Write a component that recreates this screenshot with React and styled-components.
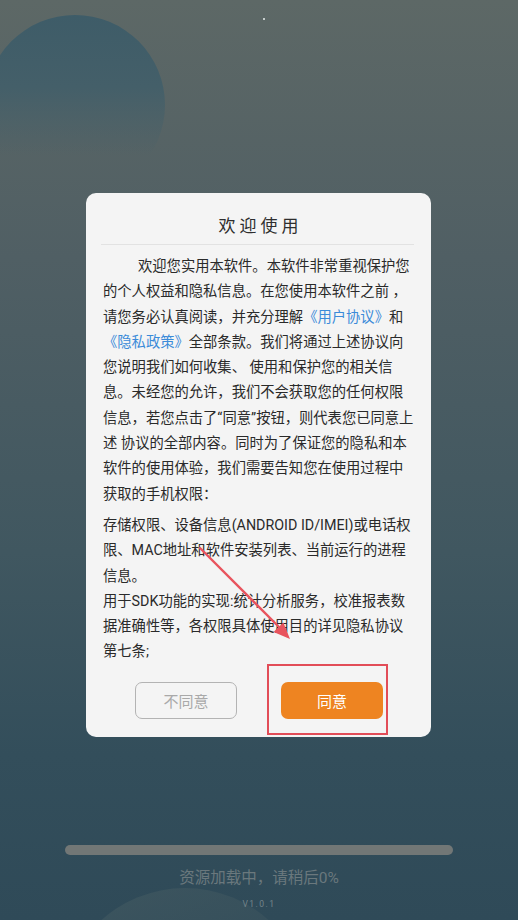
import React from 'react'
import styled, { createGlobalStyle } from 'styled-components'

const GlobalStyle = createGlobalStyle`
    body{
        margin: 0;
        background: #2f4a58;
        font-family: Roboto, "Noto Sans CJK SC", sans-serif;
    }
`

const terms = [
    '欢迎您实用本软件。本软件非常重视保护您',
    '的个人权益和隐私信息。在您使用本软件之前 ，',
    ['请您务必认真阅读，并充分理解', '《用户协议》', '和'],
    ['', '《隐私政策》', '全部条款。我们将通过上述协议向'],
    '您说明我们如何收集、 使用和保护您的相关信',
    '息。未经您的允许，我们不会获取您的任何权限',
    '信息，若您点击了“同意”按钮，则代表您已同意上',
    '述 协议的全部内容。同时为了保证您的隐私和本',
    '软件的使用体验，我们需要告知您在使用过程中',
    '获取的手机权限：',
]

const permissions = [
    '存储权限、设备信息(ANDROID ID/IMEI)或电话权',
    '限、MAC地址和软件安装列表、当前运行的进程',
    '信息。',
    '用于SDK功能的实现:统计分析服务，校准报表数',
    '据准确性等，各权限具体使用目的详见隐私协议',
    '第七条;',
]

const renderLine = (line, i) => {
    if (typeof line === 'string') return <Line key={i} indent={i === 0}>{line}</Line>
    return (
        <Line key={i}>
            {line[0]}<Link>{line[1]}</Link>{line[2]}
        </Line>
    )
}

const App = () => {
    return(
        <Screen>
            <GlobalStyle />
            <Dialog>
                <Title>欢迎使用</Title>
                <Divider />
                <Body>
                    <Paragraph>{terms.map(renderLine)}</Paragraph>
                    <Paragraph>{permissions.map((l, i) => <Line key={i}>{l}</Line>)}</Paragraph>
                </Body>
                <Actions>
                    <Button>不同意</Button>
                    <Button primary>同意</Button>
                </Actions>
            </Dialog>
            <Loader>
                <Track />
                <Status>资源加载中，请稍后0%</Status>
                <Version>V1.0.1</Version>
            </Loader>
            <Annotation viewBox="0 0 518 920">
                <circle cx="264" cy="19" r="1" fill="#e8eeee" />
                <rect x="268" y="665" width="119" height="69" fill="none" stroke="#e24d58" strokeWidth="2" />
                <line x1="200" y1="548" x2="279" y2="627" stroke="#e8545e" strokeWidth="2.4" strokeLinecap="round" />
                <polygon points="290,639 273.6,632 283.4,622.4" fill="#e8545e" />
            </Annotation>
        </Screen>
    )
}

const Screen = styled.div`
    position: relative;
    width: 518px;
    height: 920px;
    overflow: hidden;
    display: flex;
    flex-direction: column;
    align-items: center;
    padding-top: 193px;
    box-sizing: border-box;
    background: linear-gradient(180deg, #5d6866 0%, #505f64 28%, #405760 60%, #334e5b 82%, #2f4a58 100%);
    &::before{
        content: '';
        position: absolute;
        left: -15px;
        top: 15px;
        width: 180px;
        height: 180px;
        border-radius: 50%;
        background: linear-gradient(180deg, #3e5c68 0%, #445f69 40%, rgba(78, 95, 100, 0) 78%);
    }
    &::after{
        content: '';
        position: absolute;
        left: 60px;
        top: 888px;
        width: 250px;
        height: 250px;
        border-radius: 50%;
        background: linear-gradient(160deg, #465c63 0%, #344e5a 55%);
        opacity: 0.6;
    }
`

const Dialog = styled.div`
    position: relative;
    z-index: 1;
    width: 345px;
    margin-left: -1px;
    background: #f4f4f4;
    border-radius: 10px;
    padding-bottom: 18px;
`

const Title = styled.h2`
    margin: 0;
    padding: 20px 0 5px 4px;
    text-align: center;
    font-size: 17px;
    line-height: 26px;
    font-weight: normal;
    letter-spacing: 4px;
    color: #2e2e2e;
`

const Divider = styled.div`
    height: 1px;
    margin: 0 17px 0 15px;
    background: #e2e2e2;
`

const Body = styled.div`
    padding: 9px 17px 0;
    color: #2a2a2a;
    font-size: 14.3px;
    line-height: 25.3px;
`

const Paragraph = styled.div`
    & + &{
        margin-top: 6px;
    }
`

const Line = styled.div`
    white-space: nowrap;
    padding-left: ${props => props.indent ? '35px' : '0'};
`

const Link = styled.span`
    color: #3b8bd9;
`

const Actions = styled.div`
    display: flex;
    justify-content: center;
    gap: 44px;
    margin-top: 17px;
    padding-left: 1px;
`

const Button = styled.button`
    width: 102px;
    height: 37px;
    box-sizing: border-box;
    border-radius: 7px;
    font-family: Roboto, "Noto Sans CJK SC", sans-serif;
    font-size: 15px;
    border: ${props => props.primary ? 'none' : '1.5px solid #b3b3b3'};
    background: ${props => props.primary ? '#ee8421' : 'transparent'};
    color: ${props => props.primary ? '#fff' : '#a9a9a9'};
`

const Loader = styled.div`
    position: relative;
    z-index: 1;
    display: flex;
    flex-direction: column;
    align-items: center;
    margin-top: 108px;
`

const Track = styled.div`
    width: 388px;
    height: 10px;
    border-radius: 5px;
    background: #727776;
`

const Status = styled.div`
    margin-top: 13px;
    font-size: 15.5px;
    line-height: 20px;
    color: #6a787d;
`

const Version = styled.div`
    margin-top: 11px;
    font-size: 8.5px;
    letter-spacing: 1.5px;
    color: #74848a;
`

const Annotation = styled.svg`
    position: absolute;
    z-index: 2;
    left: 0;
    top: 0;
    width: 518px;
    height: 920px;
    pointer-events: none;
`

export default App
